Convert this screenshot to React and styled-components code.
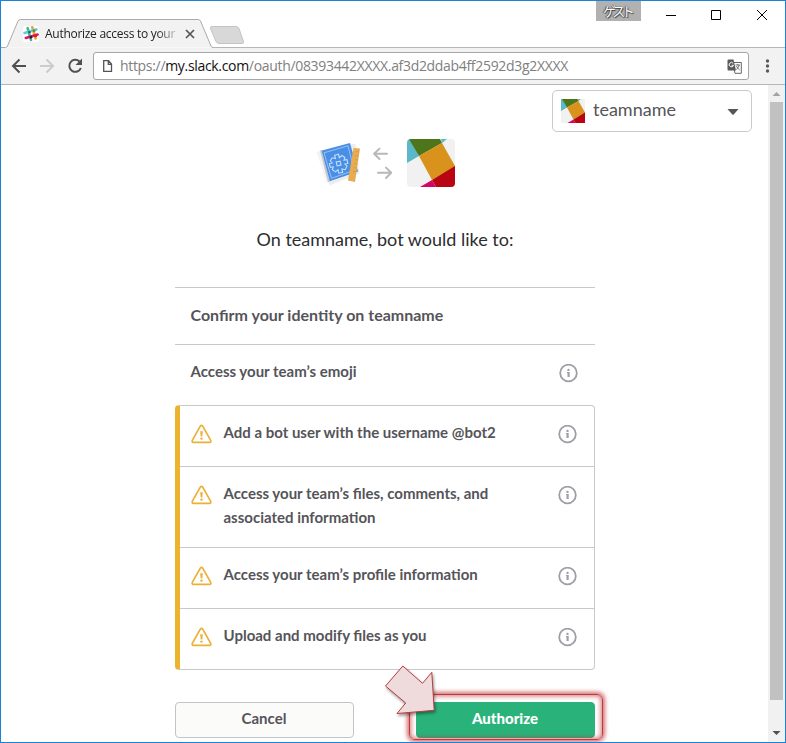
import React from "react";
import styled, { createGlobalStyle, css } from "styled-components";

const Global = createGlobalStyle`
  *, *::before, *::after { box-sizing: border-box; }
  body { margin: 0; background: #fff; }
  svg { display: block; flex: none; }
`;

const ui = `"Open Sans", "Noto Sans", "Noto Sans CJK JP", sans-serif`;
const lato = `Lato, "Liberation Sans", sans-serif`;

const Window = styled.div`
  width: 786px;
  height: 743px;
  border: 1px solid #1883d7;
  background: #fff;
  display: flex;
  flex-direction: column;
  overflow: hidden;
`;

/* ---------- title bar ---------- */
const TitleBar = styled.header`
  height: 47px;
  flex: none;
  display: flex;
  align-items: flex-start;
  position: relative;
`;
const TabShape = styled.svg`
  position: absolute;
  left: 0;
  top: 0;
`;
const Tab = styled.div`
  position: relative;
  display: flex;
  align-items: center;
  width: 212px;
  height: 27px;
  margin-top: 19px;
  padding-left: 22px;
`;
const TabTitle = styled.span`
  width: 133px;
  margin-left: 6px;
  margin-right: 7px;
  white-space: nowrap;
  font: 12px/20px ${ui};
  letter-spacing: -0.28px;
  color: #222;
  -webkit-mask-image: linear-gradient(90deg, #000 112px, rgba(0, 0, 0, 0.25) 130px);
  mask-image: linear-gradient(90deg, #000 112px, rgba(0, 0, 0, 0.25) 130px);
`;
const Guest = styled.div`
  width: 45px;
  height: 20px;
  margin-left: auto;
  background: #b1b1b1;
  color: #fff;
  font: 13px/20px "Noto Sans CJK JP", sans-serif;
  letter-spacing: -3.6px;
  padding-right: 3px;
  text-align: center;
  text-shadow: 0 0 1px #333, 1px 1px 1px #444, -1px 0 1px #555;
`;
const Controls = styled.div`
  display: flex;
  width: 144px;
  height: 30px;
`;

/* ---------- toolbar ---------- */
const Toolbar = styled.div`
  height: 37px;
  flex: none;
  display: flex;
  align-items: center;
  background: #f2f2f2;
  border-bottom: 1px solid #b6b6b6;
`;
const NavIcons = styled.div`
  width: 92px;
`;
const Address = styled.div`
  display: flex;
  align-items: center;
  width: 656px;
  height: 28px;
  border: 1px solid #a6a6a6;
  border-radius: 3px;
  background: #fff;
  padding: 0 6px 0 8px;
`;
const Url = styled.span`
  flex: 1;
  margin-left: 7px;
  font: 14px/24px ${ui};
  letter-spacing: -0.32px;
  white-space: nowrap;
  color: #808080;
`;
const Host = styled.span`
  color: #111;
`;
const MenuIcon = styled.div`
  margin-left: 15px;
`;

/* ---------- viewport ---------- */
const Viewport = styled.div`
  flex: 1;
  min-height: 0;
  display: flex;
`;
const Page = styled.main`
  width: 767px;
  display: flex;
  flex-direction: column;
  font-family: ${lato};
  color: #555459;
`;
const Scrollbar = styled.div`
  width: 17px;
  background: #f1f1f1;
  padding: 0 2px;
`;
const Thumb = styled.div`
  height: 598px;
  background: #c1c1c1;
`;

const TeamSelect = styled.div`
  align-self: flex-end;
  display: flex;
  align-items: center;
  width: 200px;
  height: 42px;
  margin: 5px 16px 0 0;
  padding: 0 12px 0 8px;
  border: 1px solid #c9cacc;
  border-radius: 5px;
`;
const TeamName = styled.span`
  flex: 1;
  margin-left: 8px;
  font-size: 18px;
  line-height: 24px;
  padding-bottom: 4px;
`;

const Column = styled.div`
  width: 420px;
  margin-left: 174px;
`;
const Hero = styled.div`
  display: flex;
  margin-top: 7px;
  padding-left: 139px;
`;
const Question = styled.h1`
  margin: 39px 0 35px;
  text-align: center;
  font-size: 18px;
  line-height: 26px;
  font-weight: 400;
  color: #2c2d30;
  white-space: nowrap;
`;
const Row = styled.div`
  display: flex;
  align-items: flex-start;
  border-top: 1px solid #c8c9cd;
  height: ${(p) => p.$h}px;
  padding: ${(p) => p.$top || 15}px 16px 0 15.5px;
`;
const RowText = styled.span`
  flex: 1;
  font-size: ${(p) => (p.$large ? 16 : 15)}px;
  line-height: 24px;
  font-weight: 700;
`;
const InfoSlot = styled.span`
  padding-top: 5px;
`;
const WarningList = styled.section`
  border: 1px solid #c8c9cd;
  border-left: 5px solid #ecb32e;
  border-radius: 4px;
  height: 265px;

  ${Row} {
    padding: 14px 16.5px 0 11px;
  }
  ${Row}:first-child {
    border-top: 0;
  }
  ${RowText} {
    margin-left: 11.5px;
  }
`;
const WarnSlot = styled.span`
  padding-top: 4px;
`;
const Actions = styled.div`
  display: flex;
  justify-content: space-between;
  margin-top: 32px;
`;
const Button = styled.button`
  width: 179px;
  height: 36px;
  padding: 0 1px 4px 0;
  border: 1px solid #c3c4c8;
  border-radius: 4px;
  background: #fbfbfa;
  color: #555459;
  font: 700 15px/20px ${lato};
  ${(p) =>
    p.$primary &&
    css`
      border-color: #2ab27b;
      background: #2ab27b;
      color: #fff;
      font-weight: 900;
    `}
`;
const Highlight = styled.div`
  position: relative;
`;
const Frame = styled.div`
  position: absolute;
  left: -7px;
  top: -8px;
  width: 194px;
  height: 46px;
  border: 1.5px solid #b93b3e;
  border-radius: 6px;
  box-shadow: 0 0 4px 2px rgba(196, 50, 52, 0.7), inset 0 0 4px 1.5px rgba(196, 50, 52, 0.6);
`;
const Pointer = styled.svg`
  position: absolute;
  left: -36px;
  top: -42px;
  filter: drop-shadow(1px 2px 1.5px rgba(0, 0, 0, 0.4));
`;

/* ---------- drawings ---------- */
const SlackHash = () => (
  <svg width="16" height="16" viewBox="0 0 16 16">
    <rect width="16" height="16" rx="2" fill="#fff" />
    <g strokeWidth="2.6" strokeLinecap="round">
      <path d="M4.6 2.2 8 14" stroke="#3eb991" />
      <path d="M9.2 1.2 12.6 12.4" stroke="#e9a820" />
      <path d="M1.500 6.9 13.400 3.400" stroke="#60cbdc" />
      <path d="M2.800 12 14.600 8.600" stroke="#e01765" />
    </g>
    <path d="m4.900 5.400 2.300-.7.7 2.200-2.300.7z" fill="#15735a" />
    <path d="m9.500 4 2.400-.7.6 2.300-2.300.7z" fill="#65863a" />
    <path d="m6.500 10.500 2.300-.7.7 2.300-2.300.7z" fill="#361238" />
    <path d="m11.100 9.200 2.300-.7.7 2.300-2.300.6z" fill="#cc2027" />
  </svg>
);

const SlackTile = ({ size, round }) => (
  <svg width={size} height={size} viewBox="0 0 48 48">
    <defs>
      <clipPath id={`tile${size}`}>
        <rect width="48" height="48" rx={round} />
      </clipPath>
    </defs>
    <g clipPath={`url(#tile${size})`}>
      <rect width="48" height="48" fill="#f1f1f2" />
      <path d="M0 0h3l9 17L0 24z" fill="#5bb8c9" />
      <path d="M34 0h6l-5 4z" fill="#5bb8c9" />
      <path d="M2 0h31l2 4-23 13z" fill="#4d7519" />
      <path d="M12 17 35 4l13 23v1L25 41z" fill="#d9921c" />
      <path d="M25 41 48 27v21H29z" fill="#b90411" />
      <path d="m13 48 12-7 4 7z" fill="#d3075f" />
    </g>
  </svg>
);

const Blueprint = () => (
  <svg width="47" height="48" viewBox="0 0 47 48">
    <g transform="translate(0 0.5)">
      <path d="m2.500 13 39-9 4 30-30 12z" fill="#000" opacity=".07" />
      <path d="m6 11.500 30-8L44 32 15 42z" fill="#4a8fe6" />
      <path d="m10 13.300 24-7 6.200 24.500-22.700 8z" fill="none" stroke="#a9cdf7" strokeWidth=".8" />
      <path d="m3 12.500 4-2 8.500 31.500-3 1.500z" fill="#f3f3f4" />
      <path d="m6 11 1.500-.5L16 42l-2 .6z" fill="#c3c7cd" />
      <g transform="translate(24.500 23.500) rotate(-13)" fill="none" stroke="#c5defa" strokeWidth="1.100">
        <path d="M-2-8.500h4v3.500l3-1.500 2.500 2.500L6-1.500h3v4H6l1.500 2.500L5 8 2 6.500V10h-4V6.500L-5 8l-2.500-3L-6 2.500h-3v-4h3L-7.500-4-5-6.500-2-5z" />
        <rect x="-2" y="-1.500" width="4" height="4" />
      </g>
      <path d="m39.500 8.500 6.500.6-5 33.400-7-1.500z" fill="#e8ac50" />
      <path d="m42 12 3 .4M41.500 16l3 .4M41 20l2.500.4M40.500 24l2.500.4M40 28l2 .4M39 32l2.500.4" stroke="#cf9440" strokeWidth=".7" />
    </g>
  </svg>
);

const ExchangeArrows = () => (
  <svg width="46" height="48" viewBox="0 0 46 48" fill="none" stroke="#b7b8bb" strokeWidth="2" strokeLinecap="round" strokeLinejoin="round">
    <path d="M26 14.800H13.500M18.500 9.600l-5.400 5.200 5.400 5.200" />
    <path d="M17 33.800H30M25 28.600l5.200 5.200-5.200 5.200" />
  </svg>
);

const Info = () => (
  <svg width="20" height="20" viewBox="0 0 20 20">
    <circle cx="9.500" cy="9" r="8.300" fill="none" stroke="#9e9ea6" strokeWidth="1.800" />
    <circle cx="9.500" cy="5.900" r="1.200" fill="#9e9ea6" />
    <path d="M8 8h2.700v5H8.500V9.100H8z" fill="#9e9ea6" />
  </svg>
);

const Warning = () => (
  <svg width="21" height="20" viewBox="0 0 21 20">
    <path d="M9.300 2.200q1.200-1.700 2.400 0l7.900 14q.9 2.200-1.200 2.200H2.600q-2.100 0-1.200-2.200z" fill="none" stroke="#ebb035" strokeWidth="1.700" strokeLinejoin="round" />
    <path d="M9.200 7.200h2.600l-.5 5.200H9.700z" fill="#ebb035" />
    <circle cx="10.500" cy="14.600" r="1.200" fill="#ebb035" />
  </svg>
);

const warnings = [
  { text: "Add a bot user with the username @bot2", h: 60 },
  { text: "Access your team’s files, comments, and associated information", h: 81 },
  { text: "Access your team’s profile information", h: 61 },
  { text: "Upload and modify files as you", h: 61 },
];

export default function App() {
  return (
    <>
      <Global />
      <Window>
        <TitleBar>
          <TabShape width="784" height="47" viewBox="1 1 784 47">
            <path d="M212 47h573v1H212z" fill="#b6b6b6" />
            <path d="M1 47.500H5.500q1.500 0 2-1.500L18 21q.7-1.500 2.500-1.500H198q1.800 0 2.500 1.500l10.500 25q.6 1.500 2 1.500" fill="#f2f2f2" stroke="#aaa" />
            <path d="M212 26.500h24q2 0 3 2l4.500 13q.5 2-1.500 2h-23q-2 0-3-2l-5.500-13q-.5-2 1.500-2z" fill="#d8d8d8" stroke="#c4c4c4" />
          </TabShape>
          <Tab>
            <SlackHash />
            <TabTitle>Authorize access to your</TabTitle>
            <svg width="10" height="10" viewBox="0 0 10 10" stroke="#555" strokeWidth="1.700">
              <path d="m1 1 8 8m0-8-8 8" />
            </svg>
          </Tab>
          <Guest>ゲスト</Guest>
          <Controls>
            <svg width="144" height="30" viewBox="641 1 144 30" fill="none" stroke="#000">
              <path d="M666 15.500h10M711.500 10.500h9v9h-9zM757 10l10 10m0-10-10 10" />
            </svg>
          </Controls>
        </TitleBar>

        <Toolbar>
          <NavIcons>
            <svg width="92" height="36" viewBox="1 48 92 36" fill="none" strokeWidth="2">
              <path d="M26 66H13.500M19.500 59.500 13 66l6.500 6.500" stroke="#505050" />
              <path d="M40 66h12.500M46.500 59.500 53 66l-6.500 6.500" stroke="#ccc" />
              <path d="M79.500 61.500a6 6 0 1 0 1.400 6.500" stroke="#505050" />
              <path d="M82 58.500V65h-6.500z" fill="#505050" />
            </svg>
          </NavIcons>
          <Address>
            <svg width="11" height="14" viewBox="0 0 11 14" fill="none" stroke="#555" strokeWidth="1.300">
              <path d="M1.700 1.700h4.800L9.500 5v7.400H1.700zM6.300 1.700V5.300h3.200" />
            </svg>
            <Url>
              https://<Host>my.slack.com</Host>/oauth/08393442XXXX.af3d2ddab4ff2592d3g2XXXX
            </Url>
            <svg width="15" height="15" viewBox="0 0 15 15">
              <path d="M5.500 3.500h8.800v10.800H8z" fill="#fff" stroke="#666" />
              <path d="M1.500.5h5l2.500 11H1.500Q.5 11.500.5 10.500v-9q0-1 1-1z" fill="#5a5a5a" />
              <path d="M6.200 4.400a2.200 2.200 0 1 0 .3 1.900H4.600" fill="none" stroke="#fff" strokeWidth="1" />
              <path d="M8.500 6h4.500M10.700 5v1M12.200 6q-.5 3-3 4.500M9.500 7q1 2.500 3.200 4" fill="none" stroke="#666" strokeWidth=".9" />
            </svg>
          </Address>
          <MenuIcon>
            <svg width="6" height="16" viewBox="0 0 6 16" fill="#5a5a5a">
              <circle cx="3.500" cy="3" r="1.700" />
              <circle cx="3.500" cy="8" r="1.700" />
              <circle cx="3.500" cy="13" r="1.700" />
            </svg>
          </MenuIcon>
        </Toolbar>

        <Viewport>
          <Page>
            <TeamSelect>
              <SlackTile size={24} round={0} />
              <TeamName>teamname</TeamName>
              <svg width="12" height="8" viewBox="0 0 12 8">
                <path d="M.5 2h11L6.700 7.500q-.7.700-1.400 0z" fill="#555459" />
              </svg>
            </TeamSelect>
            <Column>
              <Hero>
                <Blueprint />
                <ExchangeArrows />
                <SlackTile size={48} round={4} />
              </Hero>
              <Question>On teamname, bot would like to:</Question>
              <Row $h={57}>
                <RowText $large>Confirm your identity on teamname</RowText>
              </Row>
              <Row $h={61} $top={14}>
                <RowText>Access your team’s emoji</RowText>
                <InfoSlot>
                  <Info />
                </InfoSlot>
              </Row>
              <WarningList>
                {warnings.map((w) => (
                  <Row key={w.text} $h={w.h}>
                    <WarnSlot>
                      <Warning />
                    </WarnSlot>
                    <RowText>{w.text}</RowText>
                    <InfoSlot>
                      <Info />
                    </InfoSlot>
                  </Row>
                ))}
              </WarningList>
              <Actions>
                <Button>Cancel</Button>
                <Highlight>
                  <Button $primary>Authorize</Button>
                  <Frame />
                  <Pointer width="60" height="60" viewBox="380 660 60 60">
                    <path d="m385.500 686 17.300-20 19.700 17.300 9.300-11 2.400 38L397 713.500l8.700-10.500z" fill="#f0dbdc" stroke="#b93b3e" />
                  </Pointer>
                </Highlight>
              </Actions>
            </Column>
          </Page>
          <Scrollbar>
            <svg width="13" height="17" viewBox="0 0 13 17">
              <path d="M2.500 11 6.500 7l4 4z" fill="#a3a3a3" />
            </svg>
            <Thumb />
            <svg width="13" height="42" viewBox="0 0 13 42">
              <path d="M2.500 31h8l-4 4z" fill="#505050" />
            </svg>
          </Scrollbar>
        </Viewport>
      </Window>
    </>
  );
}
